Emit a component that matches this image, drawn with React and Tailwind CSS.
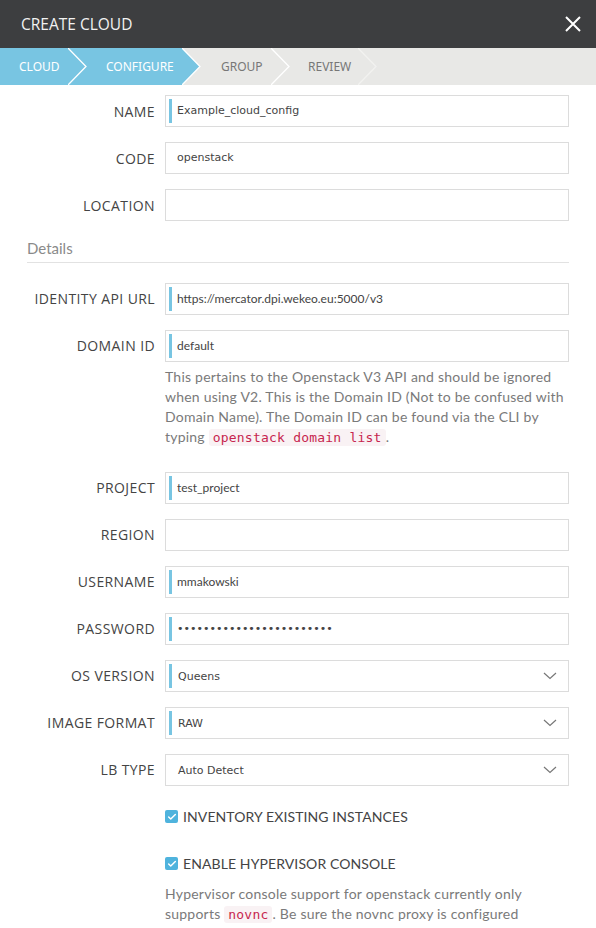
import { Check } from 'lucide-react';

const BLUE = '#78c5e2';

function Field({ label, value, marker, select, password, lato }) {
  return (
    <div className="flex items-center">
      <div className="w-[138px] shrink-0 pr-[10px] text-right whitespace-nowrap text-[14px] text-[#444] font-['Open_Sans',sans-serif] tracking-[0.4px]">
        {label}
      </div>
      <div className={`flex-1 h-[32px] border border-[#dcdcdc] bg-white flex items-center pl-[3px] ${select ? 'pr-[11px]' : 'pr-[14px]'}`}>
        <div className={`w-[3px] h-[24px] ${marker ? 'bg-[#78c5e2]' : 'bg-transparent'}`} />
        <div
          className={`flex-1 text-[#444] ${select ? 'pl-[6px] pt-[3px]' : 'pl-[5px]'} ${
            lato ? "font-['Lato',sans-serif] text-[12px]" : "font-['DejaVu_Sans',sans-serif] text-[11px] pt-[1px]"
          } ${password ? 'text-[9.6px] text-[#333]' : ''}`}
        >
          {value}
        </div>
        {select && (
          <svg width="14" height="8" viewBox="0 0 14 8">
            <path d="M1 1 L7 6.5 L13 1" fill="none" stroke="#777" strokeWidth="1.2" />
          </svg>
        )}
      </div>
    </div>
  );
}

function Code({ children }) {
  return (
    <code className="bg-[#f9f2f4] text-[#c7254e] rounded-[3px] px-[4px] py-[1px] text-[13px] font-['DejaVu_Sans_Mono',monospace]">
      {children}
    </code>
  );
}

function Box({ label }) {
  return (
    <div className="flex items-center pl-[138px] h-[20px]">
      <div className="w-[13px] h-[13px] rounded-[2px] bg-[#4fb3dd] flex items-center justify-center">
        <Check size={10} color="white" strokeWidth={3.5} />
      </div>
      <span className="ml-[5px] text-[14px] text-[#444] font-['Lato',sans-serif] tracking-[0.1px]">{label}</span>
    </div>
  );
}

export default function App() {
  return (
    <div className="w-[596px] h-[928px] overflow-hidden bg-white">
      {/* Header */}
      <div className="h-[48px] bg-[#3d3e40] flex items-center justify-between pl-[21px] pr-[15px]">
        <span className="text-[#f2f2f2] text-[15.5px] font-['Open_Sans',sans-serif] pt-[1px]">CREATE CLOUD</span>
        <svg width="16" height="16" viewBox="0 0 16 16">
          <path d="M1 1 L15 15 M15 1 L1 15" stroke="white" strokeWidth="2" />
        </svg>
      </div>

      {/* Wizard steps */}
      <div className="h-[37px] bg-[#e8e8e6] flex items-stretch text-[12px] font-['Noto_Sans',sans-serif]">
        <div className="w-[68px] bg-[#78c5e2] flex items-center pl-[19px] text-white">CLOUD</div>
        <svg width="19" height="37" viewBox="0 0 19 37" className="bg-[#78c5e2]">
          <path d="M0 0 L18 18.5 L0 37" fill="none" stroke="white" strokeWidth="1.3" />
        </svg>
        <div className="w-[95px] bg-[#78c5e2] flex items-center pl-[19px] text-white">CONFIGURE</div>
        <svg width="19" height="37" viewBox="0 0 19 37">
          <path d="M0 0 L18 18.5 L0 37 Z" fill={BLUE} />
          <path d="M0 0 L18 18.5 L0 37" fill="none" stroke="white" strokeWidth="1.3" />
        </svg>
        <div className="w-[70px] flex items-center pl-[20px] text-[#777]">GROUP</div>
        <svg width="19" height="37" viewBox="0 0 19 37">
          <path d="M0 0 L18 18.5 L0 37" fill="none" stroke="white" strokeWidth="1.3" />
        </svg>
        <div className="w-[68px] flex items-center pl-[18px] text-[#777]">REVIEW</div>
        <svg width="19" height="37" viewBox="0 0 19 37">
          <path d="M0 0 L18 18.5 L0 37" fill="none" stroke="#f2f2f0" strokeWidth="1.3" />
        </svg>
      </div>

      {/* Form */}
      <div className="pl-[27px] pr-[27px] pt-[10px] flex flex-col">
        <div className="flex flex-col gap-[15px]">
          <Field label="NAME" value="Example_cloud_config" marker />
          <Field label="CODE" value="openstack" />
          <Field label="LOCATION" value="" />
        </div>

        <div className="mt-[16px] pb-[2px] border-b border-[#e2e2e2] text-[15px] text-[#8a8a8a] font-['Lato',sans-serif]">Details</div>

        <div className="mt-[20px] flex flex-col gap-[15px]">
          <Field label="IDENTITY API URL" value="https://mercator.dpi.wekeo.eu:5000/v3" marker lato />
          <div>
            <Field label="DOMAIN ID" value="default" marker lato />
            <p className="ml-[138px] mt-[5px] text-[14px] leading-[20px] text-[#7a7a7a] font-['Lato',sans-serif] tracking-[0.22px]">
              This pertains to the Openstack V3 API and should be ignored<br />
              when using V2. This is the Domain ID (Not to be confused with<br />
              Domain Name). The Domain ID can be found via the CLI by<br />
              typing <Code>openstack domain list</Code>.
            </p>
          </div>
        </div>

        <div className="mt-[24px] flex flex-col gap-[15px]">
          <Field label="PROJECT" value="test_project" marker lato />
          <Field label="REGION" value="" />
          <Field label="USERNAME" value="mmakowski" marker lato />
          <Field label="PASSWORD" value="••••••••••••••••••••••••" marker password />
          <Field label="OS VERSION" value="Queens" marker select />
          <Field label="IMAGE FORMAT" value="RAW" marker select />
          <Field label="LB TYPE" value="Auto Detect" select />
        </div>

        <div className="mt-[21px]">
          <Box label="INVENTORY EXISTING INSTANCES" />
        </div>
        <div className="mt-[27px]">
          <Box label="ENABLE HYPERVISOR CONSOLE" />
        </div>
        <p className="ml-[138px] mt-[10px] text-[14px] leading-[20px] text-[#7a7a7a] font-['Lato',sans-serif] tracking-[0.22px]">
          Hypervisor console support for openstack currently only<br />
          supports <Code>novnc</Code>. Be sure the novnc proxy is configured
        </p>
      </div>
    </div>
  );
}
